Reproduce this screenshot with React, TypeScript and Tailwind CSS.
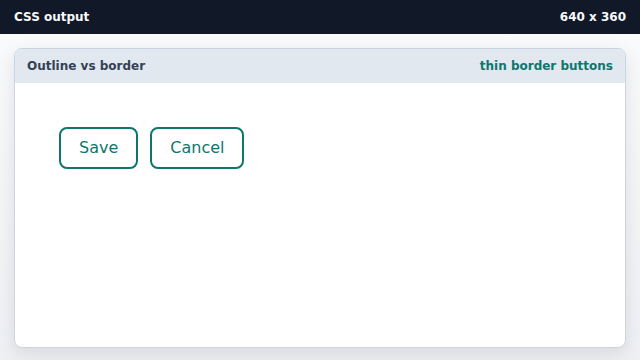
import React from 'react';

/**
 * OutlineButton - thin bordered button
 */
function OutlineButton({ label }: { label: string }) {
  return (
    <button
      type="button"
      className="h-[42px] rounded-lg border-2 border-[#0f766e] bg-white px-[18px] text-[16px] leading-[18px] text-[#0f766e]"
    >
      {label}
    </button>
  );
}

export default function App() {
  return (
    <div
      className="flex h-[360px] w-[640px] flex-col overflow-hidden bg-[#f3f4f6]"
      style={{ fontFamily: '"DejaVu Sans", sans-serif' }}
    >
      {/* Top bar */}
      <header className="flex h-[34px] shrink-0 items-center justify-between bg-[#111827] px-[14px] text-[12px] font-bold text-[#f9fafb]">
        <span>CSS output</span>
        <span>640 x 360</span>
      </header>

      {/* Canvas */}
      <div className="flex-1 bg-gradient-to-b from-[#f8fafc] to-[#eef0f3] px-[14px] pb-[12px] pt-[14px]">
        <section className="flex h-full flex-col overflow-hidden rounded-lg border border-[#cbd5e1] bg-white shadow-[0_6px_18px_rgba(15,23,42,0.10)]">
          <div className="flex h-[34px] shrink-0 items-center justify-between bg-[#e2e8f0] px-[12px] text-[12px] font-bold">
            <span className="text-[#334155]">Outline vs border</span>
            <span className="text-[#0f766e]">thin border buttons</span>
          </div>
          <div className="flex items-start gap-[12px] px-[44px] pt-[44px]">
            <OutlineButton label="Save" />
            <OutlineButton label="Cancel" />
          </div>
        </section>
      </div>
    </div>
  );
}
